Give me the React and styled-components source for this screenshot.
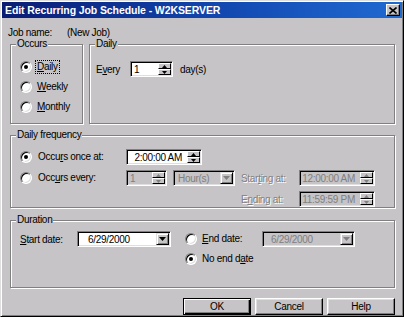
import React from 'react';
import styled, { createGlobalStyle, css } from 'styled-components';

const BG = '#c6c4c6';

const Global = createGlobalStyle`
  html, body { margin: 0; padding: 0; background: ${BG}; }
  * { box-sizing: border-box; }
  body {
    font-family: "Liberation Sans", Arial, sans-serif;
    font-size: 10px;
    letter-spacing: -0.3px;
    color: #000;
  }
`;

const Window = styled.div`
  width: 404px;
  height: 317px;
  display: flex;
  flex-direction: column;
  background: ${BG};
  border: 1px solid;
  border-color: #dfdfdf #000 #000 #dfdfdf;
  box-shadow: inset 1px 1px #fff, inset -1px -1px #808080;
  padding: 1px;
`;

const TitleBar = styled.div`
  height: 16px;
  flex: none;
  display: flex;
  align-items: center;
  justify-content: space-between;
  padding: 0 2px 0 3px;
  background: linear-gradient(to right, #0a1c74 0%, #1248b0 55%, #1f6ad2 100%);
  color: #fff;
  font-weight: bold;
  font-size: 10.5px;
  letter-spacing: -0.1px;
`;

const CloseBtn = styled.div`
  width: 14px;
  height: 12px;
  background: ${BG};
  border: 1px solid;
  border-color: #fff #000 #000 #fff;
  box-shadow: inset -1px -1px #808080;
  display: flex;
  align-items: center;
  justify-content: center;
`;

const Body = styled.div`
  flex: 1;
  display: flex;
  flex-direction: column;
  padding: 8px 7px 0 8px;
`;

const JobRow = styled.div`
  height: 12px;
  display: flex;
  align-items: center;
  margin-left: -2px;
`;

const JobLabel = styled.span`
  width: 59px;
`;

const TopRow = styled.div`
  display: flex;
  gap: 6px;
  margin-top: 6px;
  height: 80px;
`;

const Group = styled.div`
  position: relative;
  border: 1px solid #808080;
  box-shadow: inset 1px 1px #fff, 1px 1px #fff;
  height: ${p => p.$h}px;
  width: ${p => (p.$w ? `${p.$w}px` : 'auto')};
  flex: ${p => (p.$w ? 'none' : '1')};
  margin-top: ${p => p.$mt || 0}px;
`;

const GroupLabel = styled.span`
  position: absolute;
  top: -7px;
  left: 5px;
  padding: 0 1px;
  line-height: 12px;
  background: ${BG};
`;

const RadioStack = styled.div`
  display: flex;
  flex-direction: column;
  padding: 12px 0 0 9px;
`;

const RadioRow = styled.div`
  display: flex;
  align-items: center;
  gap: ${p => p.$gap || 5}px;
  height: ${p => p.$h || 16}px;
`;

const RadioCircle = styled.span`
  position: relative;
  flex: none;
  width: 12px;
  height: 12px;
  border-radius: 50%;
  background: #fff;
  border: 1px solid;
  border-color: #808080 #fff #fff #808080;
  box-shadow: inset 1px 1px #000, inset -1px -1px #dfdfdf;
  ${p =>
    p.$checked &&
    css`
      &::after {
        content: '';
        position: absolute;
        left: 3px;
        top: 3px;
        width: 4px;
        height: 4px;
        border-radius: 50%;
        background: #000;
      }
    `}
`;

const RadioLabel = styled.span`
  line-height: 12px;
  padding: 0 1px;
  margin-left: -1px;
  ${p => p.$focus && css`outline: 1px dotted #000;`}
`;

const Text = styled.span`
  display: inline-block;
  width: ${p => (p.$w ? `${p.$w}px` : 'auto')};
  ${p =>
    p.$disabled &&
    css`
      color: #808080;
      text-shadow: 1px 1px 0 #fff;
    `}
`;

const DailyRow = styled.div`
  display: flex;
  align-items: center;
  height: 16px;
  margin: 16px 0 0 6px;
  gap: 0;
`;

const Field = styled.div`
  width: ${p => p.$w}px;
  height: 16px;
  flex: none;
  display: flex;
  align-items: stretch;
  background: ${p => (p.$disabled ? BG : '#fff')};
  border: 1px solid;
  border-color: #808080 #fff #fff #808080;
  box-shadow: inset 1px 1px #000, inset -1px -1px #dfdfdf;
  padding: 1px;
  margin-right: ${p => p.$mr || 0}px;
`;

const FieldText = styled.span`
  flex: 1;
  display: flex;
  align-items: center;
  justify-content: ${p => (p.$right ? 'flex-end' : 'flex-start')};
  padding: 0 ${p => (p.$right ? 5 : 0)}px 0 ${p => p.$pl ?? 2}px;
  white-space: nowrap;
  overflow: hidden;
  color: ${p => (p.$disabled ? '#808080' : '#000')};
`;

const SpinCol = styled.div`
  width: 13px;
  flex: none;
  display: flex;
  flex-direction: column;
`;

const SmallBtn = styled.div`
  flex: 1;
  display: flex;
  align-items: center;
  justify-content: center;
  background: ${BG};
  border: 1px solid;
  border-color: #fff #000 #000 #fff;
`;

const ComboBtn = styled.div`
  width: 13px;
  flex: none;
  display: flex;
  align-items: center;
  justify-content: center;
  background: ${BG};
  border: 1px solid;
  border-color: #dfdfdf #000 #000 #dfdfdf;
  box-shadow: inset 1px 1px #fff, inset -1px -1px #808080;
`;

const FreqGrid = styled.div`
  display: grid;
  grid-template-columns: 106px 47px 68px 58px 76px;
  grid-template-rows: 16px 16px 16px;
  row-gap: 5px;
  align-items: center;
  padding: 13px 0 0 9px;
`;

const DurGrid = styled.div`
  display: grid;
  grid-template-columns: 57px 94px 14px 77px 93px;
  grid-template-rows: 16px 16px;
  row-gap: 4px;
  align-items: center;
  padding: 10px 0 0 9px;
`;

const Cell = styled.div`
  grid-column: ${p => p.$col};
  grid-row: ${p => p.$row};
  display: flex;
  align-items: center;
`;

const ButtonRow = styled.div`
  display: flex;
  justify-content: flex-end;
  gap: 4px;
  margin-top: 10px;
`;

const Button = styled.button`
  width: 68px;
  height: 17px;
  padding: 0;
  font: inherit;
  letter-spacing: inherit;
  color: #000;
  background: ${BG};
  border: 1px solid;
  border-color: #fff #000 #000 #fff;
  box-shadow: inset -1px -1px #808080, inset 1px 1px #dfdfdf;
  ${p =>
    p.$default &&
    css`
      border-color: #000;
      box-shadow: inset 1px 1px #fff, inset -1px -1px #000, inset -2px -2px #808080;
    `}
`;

const Arrow = ({ up, disabled }) => (
  <svg width="5" height="3" viewBox="0 0 5 3" style={{ display: 'block' }}>
    <polygon
      points={up ? '2.5,0 5,3 0,3' : '0,0 5,0 2.5,3'}
      fill={disabled ? '#808080' : '#000'}
    />
  </svg>
);

const DownArrow = ({ disabled }) => (
  <svg width="7" height="4" viewBox="0 0 7 4" style={{ display: 'block' }}>
    <polygon points="0,0 7,0 3.5,4" fill={disabled ? '#808080' : '#000'} />
  </svg>
);

function Spin({ w, value, disabled, right, mr }) {
  return (
    <Field $w={w} $disabled={disabled} $mr={mr}>
      <FieldText $disabled={disabled} $right={right}>{value}</FieldText>
      <SpinCol>
        <SmallBtn><Arrow up disabled={disabled} /></SmallBtn>
        <SmallBtn><Arrow disabled={disabled} /></SmallBtn>
      </SpinCol>
    </Field>
  );
}

function Combo({ w, value, disabled, pl }) {
  return (
    <Field $w={w} $disabled={disabled}>
      <FieldText $disabled={disabled} $pl={pl}>{value}</FieldText>
      <ComboBtn><DownArrow disabled={disabled} /></ComboBtn>
    </Field>
  );
}

function Radio({ checked, focus, gap, h, children }) {
  return (
    <RadioRow $gap={gap} $h={h}>
      <RadioCircle $checked={checked} />
      <RadioLabel $focus={focus}>{children}</RadioLabel>
    </RadioRow>
  );
}

export default function App() {
  return (
    <>
      <Global />
      <Window>
        <TitleBar>
          <span>Edit Recurring Job Schedule - W2KSERVER</span>
          <CloseBtn>
            <svg width="8" height="7" viewBox="0 0 8 7">
              <path d="M0.5 0.5 L7.5 6.5 M7.5 0.5 L0.5 6.5" stroke="#000" strokeWidth="1.6" />
            </svg>
          </CloseBtn>
        </TitleBar>
        <Body>
          <JobRow>
            <JobLabel>Job name:</JobLabel>
            <span>(New Job)</span>
          </JobRow>

          <TopRow>
            <Group $w={73} $h={80}>
              <GroupLabel>Occurs</GroupLabel>
              <RadioStack>
                <Radio checked focus h={20}><u>D</u>aily</Radio>
                <Radio h={20}><u>W</u>eekly</Radio>
                <Radio h={20}><u>M</u>onthly</Radio>
              </RadioStack>
            </Group>
            <Group $h={80}>
              <GroupLabel>Daily</GroupLabel>
              <DailyRow>
                <Text $w={34}>E<u>v</u>ery</Text>
                <Spin w={43} value="1" mr={7} />
                <Text>day(s)</Text>
              </DailyRow>
            </Group>
          </TopRow>

          <Group $h={80} $mt={11}>
            <GroupLabel>Daily frequency</GroupLabel>
            <FreqGrid>
              <Cell $col="1" $row="1">
                <Radio checked gap={6}>Occu<u>r</u>s once at:</Radio>
              </Cell>
              <Cell $col="2 / 4" $row="1">
                <Spin w={76} value="2:00:00 AM" right />
              </Cell>
              <Cell $col="1" $row="2">
                <Radio gap={6}>Occ<u>u</u>rs every:</Radio>
              </Cell>
              <Cell $col="2" $row="2">
                <Spin w={41} value="1" disabled />
              </Cell>
              <Cell $col="3" $row="2">
                <Combo w={62} value="Hour(s)" disabled pl={3} />
              </Cell>
              <Cell $col="4" $row="2">
                <Text $disabled>Star<u>t</u>ing at:</Text>
              </Cell>
              <Cell $col="5" $row="2">
                <Spin w={76} value="12:00:00 AM" disabled right />
              </Cell>
              <Cell $col="4" $row="3">
                <Text $disabled>E<u>n</u>ding at:</Text>
              </Cell>
              <Cell $col="5" $row="3">
                <Spin w={76} value="11:59:59 PM" disabled right />
              </Cell>
            </FreqGrid>
          </Group>

          <Group $h={53} $mt={12}>
            <GroupLabel>Duration</GroupLabel>
            <DurGrid>
              <Cell $col="1" $row="1">
                <Text><u>S</u>tart date:</Text>
              </Cell>
              <Cell $col="2" $row="1">
                <Combo w={94} value="6/29/2000" pl={9} />
              </Cell>
              <Cell $col="4" $row="1">
                <Radio><u>E</u>nd date:</Radio>
              </Cell>
              <Cell $col="5" $row="1">
                <Combo w={93} value="6/29/2000" disabled pl={7} />
              </Cell>
              <Cell $col="4 / 6" $row="2">
                <Radio checked>No end d<u>a</u>te</Radio>
              </Cell>
            </DurGrid>
          </Group>

          <ButtonRow>
            <Button $default>OK</Button>
            <Button>Cancel</Button>
            <Button>Help</Button>
          </ButtonRow>
        </Body>
      </Window>
    </>
  );
}
